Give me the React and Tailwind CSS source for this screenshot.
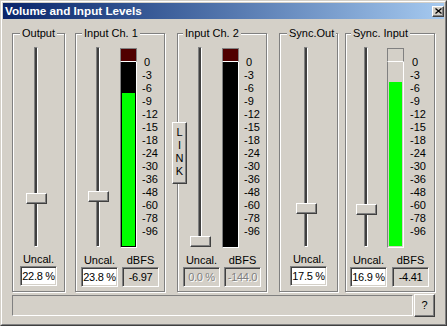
import React from "react";

const DBS = [0, -3, -6, -9, -12, -15, -18, -24, -30, -36, -48, -60, -78, -96];
const LABELS = ["0", "-3", "-6", "-9", "-12", "-15", "-18", "-24", "-30", "-36", "-48", "-60", "-78", "-96"];

function dbToY(db) {
  for (let i = 0; i < DBS.length - 1; i++) {
    if (db <= DBS[i] && db >= DBS[i + 1]) {
      return 62.3 + 13 * (i + (DBS[i] - db) / (DBS[i] - DBS[i + 1]));
    }
  }
  return 246;
}

const raised =
  "border border-t-white border-l-white border-r-[#404040] border-b-[#404040] shadow-[inset_-1px_-1px_0_#808080]";
const sunkenEdit =
  "border border-t-[#808080] border-l-[#808080] border-r-white border-b-white shadow-[inset_1px_1px_0_#404040,inset_-1px_-1px_0_#d4d0c8]";

function Slider({ value, className }) {
  const top = Math.round(189 * (1 - value));
  return (
    <div className={"relative w-[21px] h-[200px] " + className}>
      <div className="ml-[8px] w-[4px] h-full border border-t-[#808080] border-l-[#808080] border-r-white border-b-white">
        <div className="h-full w-full bg-[#404040]" />
      </div>
      <div className={"absolute left-0 w-[21px] h-[11px] bg-[#d4d0c8] " + raised} style={{ top }} />
    </div>
  );
}

function Meter({ db, active, className }) {
  const h = db == null ? 0 : Math.round(245.5 - dbToY(db));
  return (
    <div className={"w-[17px] h-[200px] flex flex-col " + className}>
      <div
        className={
          "h-[14px] border border-t-[#808080] border-l-[#808080] border-r-[#808080] border-b-white " +
          (active ? "bg-[#500000]" : "bg-[#d4d0c8]")
        }
      />
      <div
        className={
          "flex-1 flex flex-col justify-end p-px border-l border-r border-b border-l-[#808080] border-r-white border-b-white " +
          (active ? "bg-black" : "bg-[#d4d0c8]")
        }
      >
        {h > 0 && <div className="w-full bg-[#00ff00]" style={{ height: h }} />}
      </div>
    </div>
  );
}

function Scale({ className }) {
  return (
    <div className={"flex flex-col mt-[9px] " + className}>
      {LABELS.map((l) => (
        <div key={l} className={"h-[13px] leading-[13px] " + (l === "0" ? "pl-[2px]" : "")}>
          {l}
        </div>
      ))}
    </div>
  );
}

function Field({ caption, value, disabled, readOnly, className }) {
  return (
    <div className={"flex flex-col items-center w-[37px] " + className}>
      <div className="h-[13px] leading-[13px] whitespace-nowrap">{caption}</div>
      <div
        className={
          "w-[37px] h-[20px] overflow-hidden flex justify-center whitespace-nowrap leading-[18px] tracking-[-0.3px] " +
          sunkenEdit +
          " " +
          (disabled
            ? "bg-[#d4d0c8] text-[#808080] [text-shadow:1px_1px_0_#fff]"
            : readOnly
            ? "bg-[#d4d0c8]"
            : "bg-white")
        }
      >
        {value}
      </div>
    </div>
  );
}

function Group({ label, labelPos, className, children }) {
  return (
    <div
      className={
        "relative h-[259px] border border-[#808080] shadow-[inset_1px_1px_0_#fff,1px_1px_0_#fff] flex flex-col " +
        className
      }
    >
      <div className={"absolute -top-[7px] px-[2px] bg-[#d4d0c8] leading-[13px] whitespace-nowrap " + labelPos}>
        {label}
      </div>
      {children}
    </div>
  );
}

export default function App() {
  return (
    <div className="relative w-[447px] h-[326px] overflow-hidden bg-[#d4d0c8] text-black font-['Liberation_Sans',Arial,sans-serif] text-[11px] leading-[13px] border border-t-[#d4d0c8] border-l-[#d4d0c8] border-r-[#404040] border-b-[#404040]">
      <div className="h-full border border-t-white border-l-white border-r-[#808080] border-b-[#808080] p-px flex flex-col">
        <div className="h-[16px] flex items-center bg-linear-to-r from-[#0a246a] to-[#a6caf0] pl-[2px]">
          <span className="text-white font-bold text-[11.7px] leading-[16px] whitespace-nowrap">
            Volume and Input Levels
          </span>
          <div className={"ml-auto w-[12px] h-[11px] bg-[#d4d0c8] flex items-center justify-center " + raised}>
            <svg width="7" height="6" viewBox="0 0 7 6">
              <path d="M0.5 0.5 L6.5 5.5 M6.5 0.5 L0.5 5.5" stroke="#000" strokeWidth="1.3" fill="none" />
            </svg>
          </div>
        </div>

        <div className="flex mt-[14px]">
          <Group label="Output" labelPos="left-[7px]" className="ml-[9px] w-[53px]">
            <div className="flex items-start pt-[13px]">
              <Slider value={0.228} className="ml-[13px]" />
            </div>
            <div className="flex items-start mt-[6px]">
              <Field caption="Uncal." value="22.8 %" className="ml-[7px]" />
            </div>
          </Group>

          <Group label="Input Ch. 1" labelPos="left-[6px]" className="ml-[10px] w-[90px]">
            <div className="flex items-start pt-[13px]">
              <Slider value={0.238} className="ml-[12px]" />
              <Meter db={-6.97} active className="ml-[11px] mt-px" />
              <Scale className="ml-[5px]" />
            </div>
            <div className="flex items-start mt-[6px]">
              <Field caption="Uncal." value="23.8 %" className="ml-[5px]" />
              <Field caption="dBFS" value="-6.97" readOnly className="ml-[4px]" />
            </div>
          </Group>

          <Group label="Input Ch. 2" labelPos="left-[5px]" className="ml-[12px] w-[90px]">
            <div className="flex items-start pt-[13px]">
              <Slider value={0} className="ml-[12px]" />
              <Meter db={null} active className="ml-[11px] mt-px" />
              <Scale className="ml-[5px]" />
            </div>
            <div className="flex items-start mt-[6px]">
              <Field caption="Uncal." value="0.0 %" disabled className="ml-[5px]" />
              <Field caption="dBFS" value="-144.0" disabled className="ml-[4px]" />
            </div>
          </Group>

          <Group label="Sync.Out" labelPos="left-[7px]" className="ml-[12px] w-[59px]">
            <div className="flex items-start pt-[13px]">
              <Slider value={0.175} className="ml-[16px]" />
            </div>
            <div className="flex items-start mt-[6px]">
              <Field caption="Uncal." value="17.5 %" className="ml-[10px]" />
            </div>
          </Group>

          <Group label="Sync. Input" labelPos="left-[5px]" className="ml-[7px] w-[90px]">
            <div className="flex items-start pt-[13px]">
              <Slider value={0.169} className="ml-[10px]" />
              <Meter db={-4.41} className="ml-[10px] mt-px" />
              <Scale className="ml-[6px]" />
            </div>
            <div className="flex items-start mt-[6px]">
              <Field caption="Uncal." value="16.9 %" className="ml-[4px]" />
              <Field caption="dBFS" value="-4.41" readOnly className="ml-[5px]" />
            </div>
          </Group>
        </div>

        <div className="flex items-center mt-[2px] h-[23px]">
          <div className="ml-[9px] w-[401px] h-[21px] border border-t-[#808080] border-l-[#808080] border-r-white border-b-white" />
          <div className={"ml-[1px] w-[21px] h-[23px] flex items-center justify-center " + raised}>?</div>
        </div>
      </div>

      <div
        className={
          "absolute left-[171px] top-[121px] w-[15px] h-[62px] bg-[#d4d0c8] flex flex-col items-center pt-[3px] " + raised
        }
      >
        {["L", "I", "N", "K"].map((c) => (
          <div key={c} className="h-[13px] leading-[13px]">
            {c}
          </div>
        ))}
      </div>
    </div>
  );
}
